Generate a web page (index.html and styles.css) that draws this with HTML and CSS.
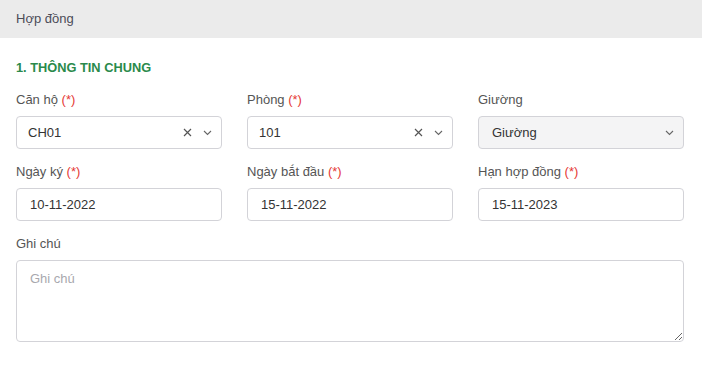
FILE: index.html
```html
<!DOCTYPE html>
<html lang="vi">
<head>
<meta charset="utf-8">
<link rel="stylesheet" href="styles.css">
</head>
<body>
<div class="header">Hợp đồng</div>
<div class="content">
  <div class="section-title">1. THÔNG TIN CHUNG</div>
  <div class="grid">
    <div class="field">
      <div class="label">Căn hộ <span class="req">(*)</span></div>
      <div class="select">
        <span class="value">CH01</span>
        <span class="icons">
          <svg class="clear" width="9" height="9" viewBox="0 0 9 9"><path d="M1 1L8 8M8 1L1 8" stroke="#555" stroke-width="1.2" fill="none"/></svg>
          <svg class="chev" width="9" height="6" viewBox="0 0 9 6"><path d="M1 1L4.5 4.5L8 1" stroke="#666" stroke-width="1.1" fill="none"/></svg>
        </span>
      </div>
    </div>
    <div class="field">
      <div class="label">Phòng <span class="req">(*)</span></div>
      <div class="select">
        <span class="value">101</span>
        <span class="icons">
          <svg class="clear" width="9" height="9" viewBox="0 0 9 9"><path d="M1 1L8 8M8 1L1 8" stroke="#555" stroke-width="1.2" fill="none"/></svg>
          <svg class="chev" width="9" height="6" viewBox="0 0 9 6"><path d="M1 1L4.5 4.5L8 1" stroke="#666" stroke-width="1.1" fill="none"/></svg>
        </span>
      </div>
    </div>
    <div class="field">
      <div class="label">Giường</div>
      <div class="select disabled">
        <span class="value">Giường</span>
        <span class="icons">
          <svg class="chev" width="9" height="6" viewBox="0 0 9 6"><path d="M1 1L4.5 4.5L8 1" stroke="#666" stroke-width="1.1" fill="none"/></svg>
        </span>
      </div>
    </div>
    <div class="field">
      <div class="label">Ngày ký <span class="req">(*)</span></div>
      <div class="input">10-11-2022</div>
    </div>
    <div class="field">
      <div class="label">Ngày bắt đầu <span class="req">(*)</span></div>
      <div class="input">15-11-2022</div>
    </div>
    <div class="field">
      <div class="label">Hạn hợp đồng <span class="req">(*)</span></div>
      <div class="input">15-11-2023</div>
    </div>
    <div class="field full">
      <div class="label">Ghi chú</div>
      <textarea class="textarea" placeholder="Ghi chú"></textarea>
    </div>
  </div>
</div>
</body>
</html>
```
FILE: styles.css
```css
* { box-sizing: border-box; }
body {
  margin: 0;
  background: #fff;
  font-family: "Liberation Sans", Arial, sans-serif;
  font-size: 13px;
  color: #333;
}
.header {
  height: 38px;
  line-height: 38px;
  padding-left: 16px;
  background: #ebebeb;
  color: #4b4b58;
  font-size: 13px;
}
.content {
  padding: 22px 18px 0 16px;
}
.section-title {
  line-height: 16px;
  font-size: 12.8px;
  font-weight: bold;
  color: #2a8a4b;
  margin-bottom: 16px;
}
.grid {
  display: grid;
  grid-template-columns: repeat(3, 1fr);
  column-gap: 25px;
  row-gap: 15px;
}
.field.full { grid-column: 1 / -1; }
.label {
  line-height: 16px;
  margin-bottom: 8px;
  color: #555;
  font-size: 13px;
}
.req { color: #e53935; }
.select, .input {
  height: 33px;
  border: 1px solid #d3d3d8;
  border-radius: 4px;
  display: flex;
  align-items: center;
  background: #fff;
  color: #333;
}
.select { padding: 0 9px 0 11px; }
.input { padding: 0 13px; }
.select .value { flex: 1; }
.select.disabled { background: #f4f4f5; }
.select.disabled .value { padding-left: 2px; }
.icons {
  display: flex;
  align-items: center;
  gap: 11px;
}
.chev { margin-top: 1px; }
.textarea {
  display: block;
  width: 100%;
  height: 82px;
  border: 1px solid #d3d3d8;
  border-radius: 4px;
  padding: 10px 13px;
  font-family: "Liberation Sans", Arial, sans-serif;
  font-size: 13px;
  color: #333;
  resize: vertical;
  margin: 0;
}
.textarea::placeholder { color: #a8a8ae; }
```
